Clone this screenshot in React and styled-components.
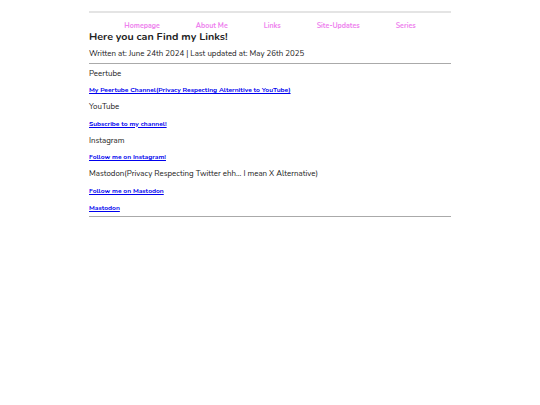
import React from "react";
import styled, { createGlobalStyle } from "styled-components";

const Global = createGlobalStyle`
  body {
    margin: 0;
    background: #fff;
    font-family: "Nunito", "Lato", "Open Sans", sans-serif;
    color: #222;
  }
`;

const Page = styled.div`
  width: 362px;
  margin: 0 auto;
  padding-top: 11px;
`;

const Rule = styled.hr`
  border: none;
  border-top: ${(p) => (p.light ? "2px solid #e4e4e4" : "1px solid #aaa")};
  margin: 0;
`;

const Nav = styled.nav`
  display: flex;
  justify-content: center;
  gap: 36px;
  padding-top: 7.5px;
  line-height: 9px;
`;

const NavLink = styled.a`
  color: #ee82ee;
  font-size: 7px;
  font-weight: 700;
  text-decoration: none;
`;

const Heading = styled.h1`
  font-size: 10.7px;
  line-height: 14px;
  font-weight: 700;
  margin: 0;
`;

const Meta = styled.p`
  font-size: 7.9px;
  line-height: 11px;
  margin: 4px 0 4px;
`;

const Section = styled.div`
  display: flex;
  flex-direction: column;
  align-items: flex-start;
  gap: 4.75px;
  padding: 4px 0 2px;
`;

const Label = styled.p`
  font-size: 7.9px;
  margin: 0;
  line-height: 12px;
`;

const Link = styled.a`
  color: #0000ee;
  font-size: 6.7px;
  font-weight: 700;
  text-decoration: underline;
  line-height: 12px;
`;

const items = [
  { label: "Peertube", links: ["My Peertube Channel(Privacy Respecting Alternitive to YouTube)"] },
  { label: "YouTube", links: ["Subscribe to my channel!"] },
  { label: "Instagram", links: ["Follow me on Instagram!"] },
  {
    label: "Mastodon(Privacy Respecting Twitter ehh... I mean X Alternative)",
    links: ["Follow me on Mastodon", "Mastodon"],
  },
];

export default function App() {
  return (
    <>
      <Global />
      <Page>
        <Rule light />
        <Nav>
          {["Homepage", "About Me", "Links", "Site-Updates", "Series"].map((n) => (
            <NavLink key={n} href="#">{n}</NavLink>
          ))}
        </Nav>
        <Heading>Here you can Find my Links!</Heading>
        <Meta>Written at: June 24th 2024 | Last updated at: May 26th 2025</Meta>
        <Rule />
        <Section>
          {items.map((it) => (
            <React.Fragment key={it.label}>
              <Label>{it.label}</Label>
              {it.links.map((l) => (
                <Link key={l} href="#">{l}</Link>
              ))}
            </React.Fragment>
          ))}
        </Section>
        <Rule />
      </Page>
    </>
  );
}
